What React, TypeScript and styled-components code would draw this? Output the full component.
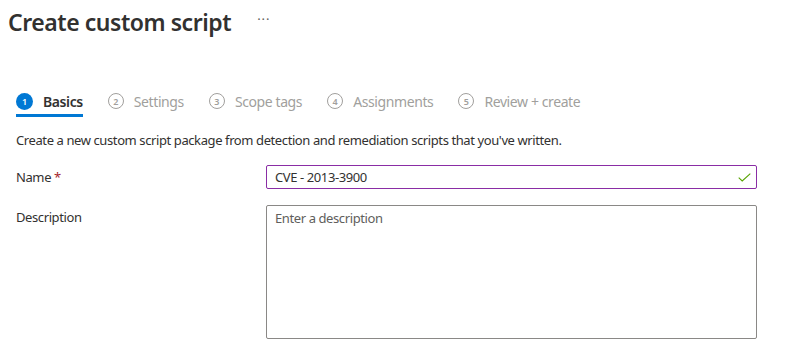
import React, { useState } from 'react';
import styled, { createGlobalStyle } from 'styled-components';

const GlobalStyle = createGlobalStyle`
    body {
        margin: 0;
        background: #ffffff;
        font-family: "Noto Sans", "Open Sans", Arial, sans-serif;
        color: #323130;
        letter-spacing: -0.4px;
    }
`

const Page = styled.div`
    width: 786px;
    height: 347px;
    overflow: hidden;
    background: #ffffff;
`

const Header = styled.div`
    display: flex;
    align-items: center;
    height: 44px;
    padding: 0 0 0 8px;
`

const Title = styled.h1`
    margin: 0;
    font-size: 23px;
    font-weight: 600;
    color: #323130;
    letter-spacing: -0.45px;
`

const More = styled.span`
    margin-left: 26px;
    font-size: 13px;
    color: #605e5c;
    letter-spacing: 1px;
    position: relative;
    top: -3px;
`

const Steps = styled.div`
    display: flex;
    margin: 44px 0 0 16px;
    height: 29px;
`

const Step = styled.div<{ $active?: boolean }>`
    display: flex;
    align-items: center;
    gap: 10px;
    height: 26px;
    margin-right: 25px;
    border-bottom: 3px solid ${({ $active }) => ($active ? '#0078d4' : 'transparent')};
    font-size: 14px;
    font-weight: ${({ $active }) => ($active ? 600 : 400)};
    color: ${({ $active }) => ($active ? '#323130' : '#a19f9d')};
`

const Badge = styled.span<{ $active?: boolean }>`
    width: ${({ $active }) => ($active ? '17px' : '16px')};
    height: ${({ $active }) => ($active ? '17px' : '16px')};
    border-radius: 50%;
    box-sizing: border-box;
    display: flex;
    align-items: center;
    justify-content: center;
    font-size: 9px;
    font-weight: 600;
    letter-spacing: 0;
    background: ${({ $active }) => ($active ? '#0078d4' : 'transparent')};
    color: ${({ $active }) => ($active ? '#ffffff' : '#a19f9d')};
    border: ${({ $active }) => ($active ? 'none' : '1px solid #a19f9d')};
`

const Intro = styled.p`
    margin: 14px 0 0 16px;
    font-size: 13px;
    color: #323130;
`

const Form = styled.div`
    display: grid;
    grid-template-columns: 250px 491px;
    row-gap: 16px;
    margin: 16px 0 0 16px;
`

const Label = styled.label`
    font-size: 13px;
    color: #323130;
    padding-top: 3px;
`

const Required = styled.span`
    color: #a4262c;
    margin-left: 3px;
`

const InputWrap = styled.div`
    position: relative;
    height: 24px;
`

const Input = styled.input`
    width: 100%;
    height: 24px;
    box-sizing: border-box;
    border: 1px solid #8a2da5;
    border-radius: 2px;
    padding: 0 28px 0 8px;
    font-family: inherit;
    font-size: 13px;
    letter-spacing: -0.4px;
    color: #323130;
    outline: none;
`

const Check = styled.svg`
    position: absolute;
    right: 6px;
    top: 8px;
`

const TextArea = styled.textarea`
    width: 100%;
    height: 134px;
    box-sizing: border-box;
    border: 1px solid #8a8886;
    border-radius: 2px;
    padding: 3px 8px;
    font-family: inherit;
    font-size: 13px;
    letter-spacing: -0.4px;
    color: #323130;
    resize: none;
    outline: none;

    &::placeholder {
        color: #605e5c;
    }
`

const steps = ['Basics', 'Settings', 'Scope tags', 'Assignments', 'Review + create'];

const App = () => {
    const [name, setName] = useState('CVE - 2013-3900');
    const [description, setDescription] = useState('');

    return (
        <Page>
            <GlobalStyle />
            <Header>
                <Title>Create custom script</Title>
                <More>···</More>
            </Header>
            <Steps>
                {steps.map((s, i) => (
                    <Step key={s} $active={i === 0}>
                        <Badge $active={i === 0}>{i + 1}</Badge>
                        {s}
                    </Step>
                ))}
            </Steps>
            <Intro>Create a new custom script package from detection and remediation scripts that you've written.</Intro>
            <Form>
                <Label>
                    Name<Required>*</Required>
                </Label>
                <InputWrap>
                    <Input value={name} onChange={(e) => setName(e.target.value)} />
                    <Check width="13" height="9" viewBox="0 0 13 9">
                        <path d="M0.7 4.6 L4.2 8 L12.3 0.7" fill="none" stroke="#57a300" strokeWidth="1.1" />
                    </Check>
                </InputWrap>
                <Label>Description</Label>
                <TextArea
                    placeholder="Enter a description"
                    value={description}
                    onChange={(e) => setDescription(e.target.value)}
                />
            </Form>
        </Page>
    );
};

export default App;
